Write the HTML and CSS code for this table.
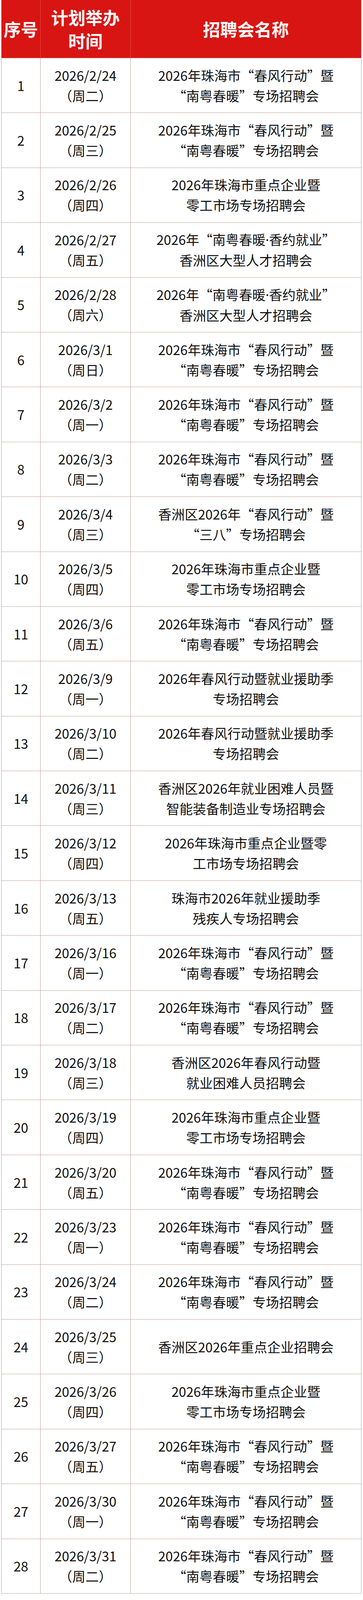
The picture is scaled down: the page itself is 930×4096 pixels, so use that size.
FILE: index.html
```html
<!DOCTYPE html>
<html lang="zh-CN">
<head>
<meta charset="utf-8">
<title>招聘会计划</title>
<link rel="stylesheet" href="styles.css">
</head>
<body>
<div class="table">
  <div class="row head">
    <div class="cell">序号</div>
    <div class="cell">计划举办<br>时间</div>
    <div class="cell">招聘会名称</div>
  </div>
  <div class="row"><div class="cell">1</div><div class="cell">2026/2/24<br>（周二）</div><div class="cell">2026年珠海市“春风行动”暨<br>“南粤春暖”专场招聘会</div></div>
  <div class="row"><div class="cell">2</div><div class="cell">2026/2/25<br>（周三）</div><div class="cell">2026年珠海市“春风行动”暨<br>“南粤春暖”专场招聘会</div></div>
  <div class="row"><div class="cell">3</div><div class="cell">2026/2/26<br>（周四）</div><div class="cell">2026年珠海市重点企业暨<br>零工市场专场招聘会</div></div>
  <div class="row"><div class="cell">4</div><div class="cell">2026/2/27<br>（周五）</div><div class="cell"><p class="txt">2026年“南粤春暖<span class="dot">·</span>香约就业”<br>香洲区大型人才招聘会</p></div></div>
  <div class="row"><div class="cell">5</div><div class="cell">2026/2/28<br>（周六）</div><div class="cell"><p class="txt">2026年“南粤春暖<span class="dot">·</span>香约就业”<br>香洲区大型人才招聘会</p></div></div>
  <div class="row"><div class="cell">6</div><div class="cell">2026/3/1<br>（周日）</div><div class="cell">2026年珠海市“春风行动”暨<br>“南粤春暖”专场招聘会</div></div>
  <div class="row"><div class="cell">7</div><div class="cell">2026/3/2<br>（周一）</div><div class="cell">2026年珠海市“春风行动”暨<br>“南粤春暖”专场招聘会</div></div>
  <div class="row"><div class="cell">8</div><div class="cell">2026/3/3<br>（周二）</div><div class="cell">2026年珠海市“春风行动”暨<br>“南粤春暖”专场招聘会</div></div>
  <div class="row"><div class="cell">9</div><div class="cell">2026/3/4<br>（周三）</div><div class="cell">香洲区2026年“春风行动”暨<br>“三八”专场招聘会</div></div>
  <div class="row"><div class="cell">10</div><div class="cell">2026/3/5<br>（周四）</div><div class="cell">2026年珠海市重点企业暨<br>零工市场专场招聘会</div></div>
  <div class="row"><div class="cell">11</div><div class="cell">2026/3/6<br>（周五）</div><div class="cell">2026年珠海市“春风行动”暨<br>“南粤春暖”专场招聘会</div></div>
  <div class="row"><div class="cell">12</div><div class="cell">2026/3/9<br>（周一）</div><div class="cell">2026年春风行动暨就业援助季<br>专场招聘会</div></div>
  <div class="row"><div class="cell">13</div><div class="cell">2026/3/10<br>（周二）</div><div class="cell">2026年春风行动暨就业援助季<br>专场招聘会</div></div>
  <div class="row"><div class="cell">14</div><div class="cell">2026/3/11<br>（周三）</div><div class="cell">香洲区2026年就业困难人员暨<br>智能装备制造业专场招聘会</div></div>
  <div class="row"><div class="cell">15</div><div class="cell">2026/3/12<br>（周四）</div><div class="cell">2026年珠海市重点企业暨零<br>工市场专场招聘会</div></div>
  <div class="row"><div class="cell">16</div><div class="cell">2026/3/13<br>（周五）</div><div class="cell">珠海市2026年就业援助季<br>残疾人专场招聘会</div></div>
  <div class="row"><div class="cell">17</div><div class="cell">2026/3/16<br>（周一）</div><div class="cell">2026年珠海市“春风行动”暨<br>“南粤春暖”专场招聘会</div></div>
  <div class="row"><div class="cell">18</div><div class="cell">2026/3/17<br>（周二）</div><div class="cell">2026年珠海市“春风行动”暨<br>“南粤春暖”专场招聘会</div></div>
  <div class="row"><div class="cell">19</div><div class="cell">2026/3/18<br>（周三）</div><div class="cell">香洲区2026年春风行动暨<br>就业困难人员招聘会</div></div>
  <div class="row"><div class="cell">20</div><div class="cell">2026/3/19<br>（周四）</div><div class="cell">2026年珠海市重点企业暨<br>零工市场专场招聘会</div></div>
  <div class="row"><div class="cell">21</div><div class="cell">2026/3/20<br>（周五）</div><div class="cell">2026年珠海市“春风行动”暨<br>“南粤春暖”专场招聘会</div></div>
  <div class="row"><div class="cell">22</div><div class="cell">2026/3/23<br>（周一）</div><div class="cell">2026年珠海市“春风行动”暨<br>“南粤春暖”专场招聘会</div></div>
  <div class="row"><div class="cell">23</div><div class="cell">2026/3/24<br>（周二）</div><div class="cell">2026年珠海市“春风行动”暨<br>“南粤春暖”专场招聘会</div></div>
  <div class="row"><div class="cell">24</div><div class="cell">2026/3/25<br>（周三）</div><div class="cell">香洲区2026年重点企业招聘会</div></div>
  <div class="row"><div class="cell">25</div><div class="cell">2026/3/26<br>（周四）</div><div class="cell">2026年珠海市重点企业暨<br>零工市场专场招聘会</div></div>
  <div class="row"><div class="cell">26</div><div class="cell">2026/3/27<br>（周五）</div><div class="cell">2026年珠海市“春风行动”暨<br>“南粤春暖”专场招聘会</div></div>
  <div class="row"><div class="cell">27</div><div class="cell">2026/3/30<br>（周一）</div><div class="cell">2026年珠海市“春风行动”暨<br>“南粤春暖”专场招聘会</div></div>
  <div class="row"><div class="cell">28</div><div class="cell">2026/3/31<br>（周二）</div><div class="cell">2026年珠海市“春风行动”暨<br>“南粤春暖”专场招聘会</div></div>
</div>
</body>
</html>
```
FILE: styles.css
```css
html, body {
  margin: 0;
  padding: 0;
  background: #ffffff;
}
body {
  font-family: "Noto Sans CJK SC", "Noto Sans", sans-serif;
  color: #111111;
}
.table {
  margin-left: 3px;
  width: 923px;
  border-left: 1px solid #c49a9a;
  border-right: 1px solid #c49a9a;
  box-sizing: border-box;
}
.row {
  display: grid;
  grid-template-columns: 100px 231px 1fr;
  height: 140.4px;
  box-sizing: border-box;
  border-bottom: 1px solid #c9a3a3;
}
.cell {
  display: flex;
  align-items: center;
  justify-content: center;
  text-align: center;
  font-size: 34px;
  line-height: 52px;
  border-right: 1px solid #c49a9a;
  box-sizing: border-box;
}
.cell:last-child {
  border-right: none;
}
.txt {
  margin: 0;
}
.dot {
  font-family: "Noto Sans", "DejaVu Sans", sans-serif;
}
.row.head {
  height: 149px;
  background: #d81512;
  border-bottom: 1px solid #e9706b;
}
.row.head .cell {
  color: #ffffff;
  font-weight: 700;
  font-size: 44px;
  line-height: 60px;
  border-right-color: #e5524c;
}
.row.head .cell:last-child {
  border-right: none;
}
```
